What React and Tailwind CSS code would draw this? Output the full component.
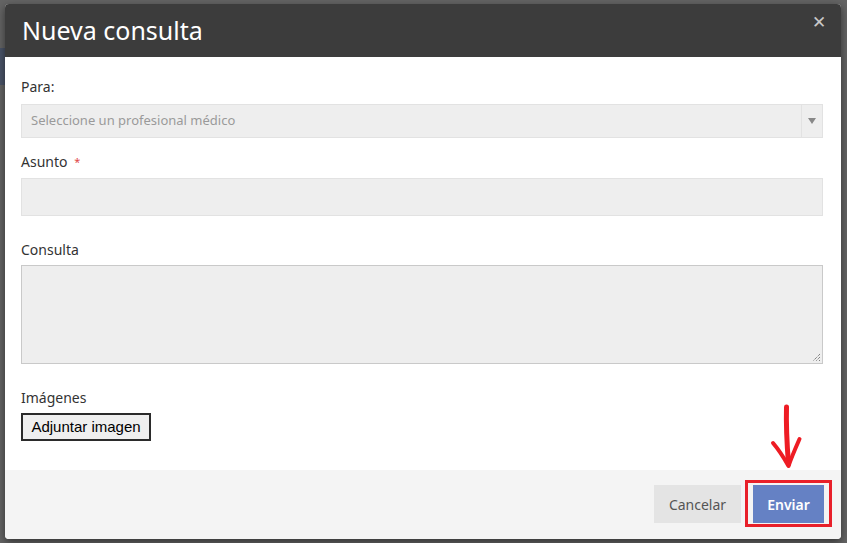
import React from "react";

export default function App() {
  const font = { fontFamily: '"Noto Sans", "Open Sans", sans-serif' };
  return (
    <div className="relative w-[847px] h-[543px] overflow-hidden bg-[#646464] pt-[4px] pl-[5px]" style={font}>
      <div className="absolute left-0 top-[48px] w-[5px] h-[37px] bg-[#4a5468]" />
      <div className="relative w-[836px] h-[535px] bg-white rounded-[4px] overflow-hidden shadow-[0_3px_9px_rgba(0,0,0,0.5)] flex flex-col">
        {/* header */}
        <div className="h-[53px] bg-[#3c3c3c] flex items-center justify-between pl-[17px] pr-[15px] shrink-0">
          <h1 className="text-white text-[25px] leading-none" style={font}>Nueva consulta</h1>
          <span className="text-[#c8c8c8] text-[17px] leading-none -mt-[18px]">✕</span>
        </div>
        {/* body */}
        <div className="flex-1 pl-4 pr-[18px] pt-[20px] text-[#333] text-[14px]">
          <div className="leading-[20px] h-[20px]">Para:</div>
          <div className="mt-[7px] h-[34px] bg-[#eeeeee] border border-[#e2e2e2] flex items-stretch">
            <div className="flex-1 flex items-center pl-[9px] text-[13px] text-[#9a9a9a]">Seleccione un profesional médico</div>
            <div className="w-[21px] border-l border-[#e2e2e2] flex items-center justify-center">
              <svg width="8" height="6" viewBox="0 0 8 6"><path d="M0 0 H8 L4 6 Z" fill="#888" /></svg>
            </div>
          </div>
          <div className="mt-[14px] leading-[20px] h-[20px]">Asunto <span className="text-[#e04545] text-[11px] align-top ml-[3px]">*</span></div>
          <div className="mt-[6px] h-[38px] bg-[#eeeeee] border border-[#e2e2e2]" />
          <div className="mt-[24px] leading-[20px] h-[20px]">Consulta</div>
          <div className="relative mt-[5px] h-[99px] bg-[#eeeeee] border border-[#c9c9c9]">
            <svg className="absolute right-[1px] bottom-[1px]" width="10" height="10" viewBox="0 0 10 10">
              <path d="M9 2 L2 9 M9 5 L5 9 M9 8 L8 9" stroke="#555" strokeWidth="1" strokeDasharray="1 1" />
            </svg>
          </div>
          <div className="mt-[24px] leading-[20px] h-[20px]">Imágenes</div>
          <button className="mt-[5px] h-[28px] w-[130px] bg-[#efefef] border-2 border-[#2b2b2b] text-[15px] text-black" style={{ fontFamily: '"Liberation Sans", Arial, sans-serif' }}>
            Adjuntar imagen
          </button>
        </div>
        {/* footer */}
        <div className="h-[69px] bg-[#f4f4f4] shrink-0 flex justify-end items-start pt-[15px] pr-[17px] gap-[12px]">
          <button className="h-[38px] w-[87px] bg-[#e4e4e4] text-[#555] text-[14px]" style={font}>Cancelar</button>
          <button className="h-[38px] w-[71px] bg-[#6581c4] text-white text-[14px] font-semibold" style={font}>Enviar</button>
        </div>
        {/* annotation box */}
        <div className="absolute left-[740px] top-[476px] w-[87px] h-[47px] border-[3px] border-[#e8202a]" />
      </div>
      {/* red arrow */}
      <svg className="absolute left-0 top-0 pointer-events-none" width="847" height="543" viewBox="0 0 847 543">
        <path d="M786.5 407 C786 425 787 445 788.5 464" stroke="#ee1c24" strokeWidth="5" strokeLinecap="round" fill="none" />
        <path d="M773 443 C779 450 784 458 788.5 466 C792 456 796 447 799.5 439" stroke="#ee1c24" strokeWidth="4" strokeLinecap="round" strokeLinejoin="round" fill="none" />
      </svg>
    </div>
  );
}
